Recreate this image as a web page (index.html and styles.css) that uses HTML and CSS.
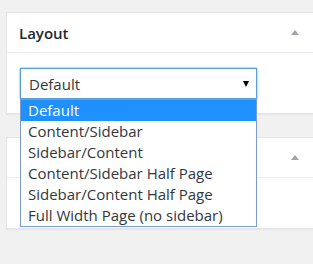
FILE: index.html
```html
<!DOCTYPE html>
<html>

<head>
    <title>Layout</title>
    <link rel="stylesheet" href="styles.css">
</head>

<body>
    <div class="page">
        <div class="postbox">
            <div class="hndle">
                <h2>Layout</h2>
                <span class="toggle"></span>
            </div>
            <div class="inside">
                <div class="select-wrap">
                    <div class="select">
                        <span>Default</span>
                        <span class="caret"></span>
                    </div>
                    <ul class="dropdown">
                        <li class="selected">Default</li>
                        <li>Content/Sidebar</li>
                        <li>Sidebar/Content</li>
                        <li>Content/Sidebar Half Page</li>
                        <li>Sidebar/Content Half Page</li>
                        <li>Full Width Page (no sidebar)</li>
                    </ul>
                </div>
            </div>
        </div>

        <div class="postbox">
            <div class="hndle">
                <h2></h2>
                <span class="toggle"></span>
            </div>
            <div class="inside empty"></div>
        </div>
    </div>
</body>

</html>
```

FILE: styles.css
```css
body {
    font-family: "Open Sans", "Liberation Sans", sans-serif;
    background-color: #f1f1f1;
    margin: 0;
    color: #32373c;
}

.page {
    width: 307px;
    height: 252px;
    padding: 12px 0 0 6px;
    overflow: hidden;
}

.postbox {
    width: 330px;
    background-color: #ffffff;
    border: 1px solid #e5e5e5;
    box-shadow: 0 1px 1px rgba(0, 0, 0, 0.04);
    margin-bottom: 23px;
}

.hndle {
    display: flex;
    align-items: center;
    justify-content: space-between;
    height: 39px;
    padding: 0 38px 0 12px;
    border-bottom: 1px solid #eeeeee;
}

.hndle h2 {
    margin: 0;
    font-size: 15px;
    font-weight: 600;
    color: #23282d;
}

.toggle {
    width: 0;
    height: 0;
    border-left: 4px solid transparent;
    border-right: 4px solid transparent;
    border-bottom: 5px solid #a0a5aa;
}

.inside {
    padding: 15px 0 14px 13px;
}

.inside.empty {
    height: 50px;
    padding: 0;
}

.select-wrap {
    position: relative;
    width: 237px;
}

.select {
    display: flex;
    align-items: center;
    justify-content: space-between;
    box-sizing: border-box;
    height: 31px;
    padding: 0 7px 0 8px;
    border: 1px solid #5b9dd9;
    box-shadow: 0 0 2px rgba(30, 140, 190, 0.8);
    font-size: 15px;
}

.caret {
    width: 0;
    height: 0;
    border-left: 3.5px solid transparent;
    border-right: 3.5px solid transparent;
    border-top: 6px solid #000000;
}

.dropdown {
    position: absolute;
    top: 31px;
    left: 0;
    width: 235px;
    margin: 0;
    padding: 0;
    list-style: none;
    background-color: #ffffff;
    border: 1px solid #7b9ad0;
    z-index: 2;
}

.dropdown li {
    height: 21px;
    line-height: 21px;
    padding-left: 7px;
    font-size: 15px;
    white-space: nowrap;
}

.dropdown li.selected {
    background-color: #1e90ff;
    color: #ffffff;
}
```
